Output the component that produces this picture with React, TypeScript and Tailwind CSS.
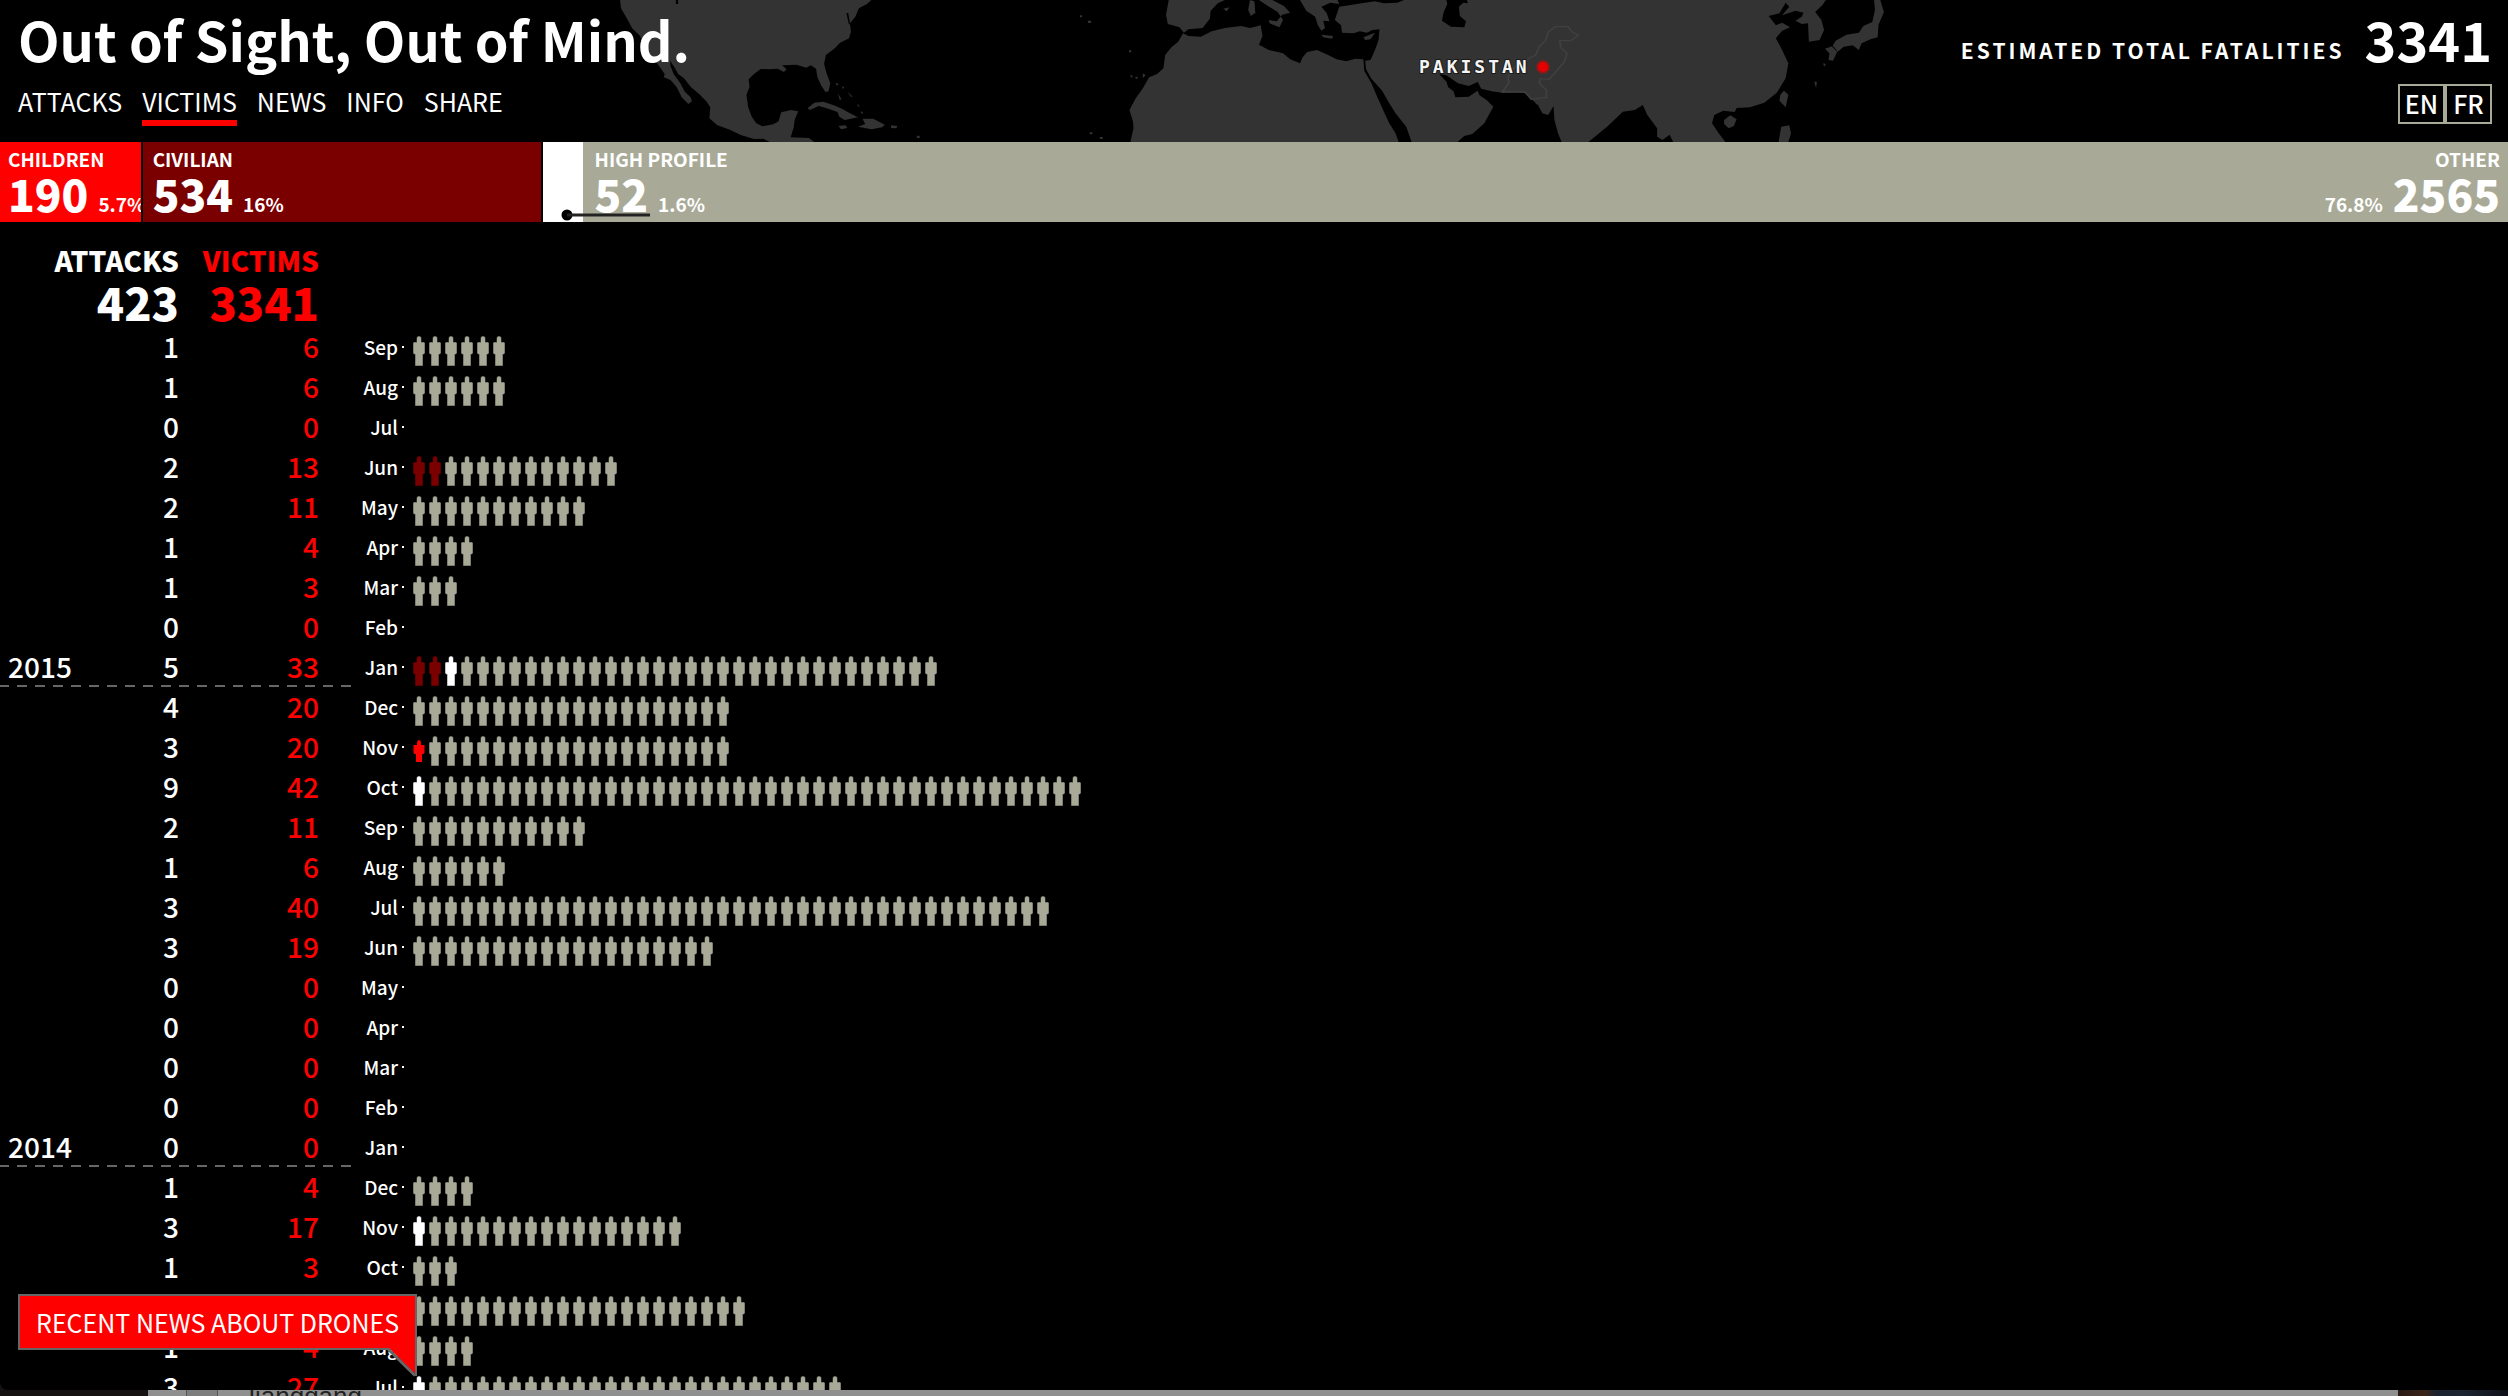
type Kind = "child" | "civilian" | "highProfile" | "other";

interface MonthRow {
  month: string;
  attacks: number;
  victims: number;
  child?: number;
  civilian?: number;
  highProfile?: number;
  year?: number;
}

const TOTAL = 3341;

const NAV = ["ATTACKS", "VICTIMS", "NEWS", "INFO", "SHARE"];

const ROWS: MonthRow[] = [
  { month: "Sep", attacks: 1, victims: 6 },
  { month: "Aug", attacks: 1, victims: 6 },
  { month: "Jul", attacks: 0, victims: 0 },
  { month: "Jun", attacks: 2, victims: 13, civilian: 2 },
  { month: "May", attacks: 2, victims: 11 },
  { month: "Apr", attacks: 1, victims: 4 },
  { month: "Mar", attacks: 1, victims: 3 },
  { month: "Feb", attacks: 0, victims: 0 },
  { month: "Jan", attacks: 5, victims: 33, civilian: 2, highProfile: 1, year: 2015 },
  { month: "Dec", attacks: 4, victims: 20 },
  { month: "Nov", attacks: 3, victims: 20, child: 1 },
  { month: "Oct", attacks: 9, victims: 42, highProfile: 1 },
  { month: "Sep", attacks: 2, victims: 11 },
  { month: "Aug", attacks: 1, victims: 6 },
  { month: "Jul", attacks: 3, victims: 40 },
  { month: "Jun", attacks: 3, victims: 19 },
  { month: "May", attacks: 0, victims: 0 },
  { month: "Apr", attacks: 0, victims: 0 },
  { month: "Mar", attacks: 0, victims: 0 },
  { month: "Feb", attacks: 0, victims: 0 },
  { month: "Jan", attacks: 0, victims: 0, year: 2014 },
  { month: "Dec", attacks: 1, victims: 4 },
  { month: "Nov", attacks: 3, victims: 17, highProfile: 1 },
  { month: "Oct", attacks: 1, victims: 3 },
  { month: "Sep", attacks: 4, victims: 21 },
  { month: "Aug", attacks: 1, victims: 4 },
  { month: "Jul", attacks: 3, victims: 27, highProfile: 1 },
];

const FILL: Record<Kind, string> = {
  child: "fill-[#ff0000]",
  civilian: "fill-[#7a0000]",
  highProfile: "fill-white",
  other: "fill-[#a8aa97]",
};

function Person({ kind }: { kind: Kind }) {
  return (
    <svg viewBox="0 0 16 40" className={`h-10 w-4 shrink-0 ${FILL[kind]}`} aria-hidden="true">
      {kind === "child" ? (
        <path d="M6 15.500Q6 13 8 13T10 15.500V18H13.500V26L12.500 27H11V35H5V27H3.500L2.500 26V18H6Z" />
      ) : (
        <>
          <path d="M5.500 11.500Q5.500 9 8 9T10.500 11.500V15H13L14 16V26L13 27.500H12V39H4V27.500H3L2 26V16L3 15H5.500Z" opacity="0.5" />
          <path d="M6 11.500Q6 9.500 8 9.500T10 11.500V15.500H13L13.500 16V26L12.500 27H11.500V38.500H4.500V27H3.500L2.500 26V16L3 15.500H6Z" />
        </>
      )}
    </svg>
  );
}

function peopleOf(row: MonthRow): Kind[] {
  const { child = 0, civilian = 0, highProfile = 0, victims } = row;
  return [
    ...Array<Kind>(child).fill("child"),
    ...Array<Kind>(civilian).fill("civilian"),
    ...Array<Kind>(highProfile).fill("highProfile"),
    ...Array<Kind>(victims - child - civilian - highProfile).fill("other"),
  ];
}

function WorldMap() {
  return (
    <svg
      viewBox="0 0 1392 142"
      width="1392"
      height="142"
      className="absolute top-0 left-1/2 -translate-x-1/2"
      role="img"
      aria-label="World map with Pakistan marked"
    >
      <g transform="translate(42 0) scale(.4464 .3333)" fill="#333">
        <path d="M45 0L47 25 60 55 72 85 90 108 97 140 110 168 128 190 145 222 143 232 158 240 172 262 183 292 198 312 206 304 203 292 190 275 180 250 165 222 158 198 157 182 168 205 175 222 188 235 204 262 222 282 238 304 247 322 245 355 262 375 292 390 315 405 345 417 366 416 380 426H480L468 414 427 412 434 382 436 360 444 334 428 330 406 337 400 364 388 373 364 379 350 370 340 350 332 322 328 285 335 260 333 238 345 222 360 207 380 208 398 206 412 216 418 208 408 196 440 194 462 203 472 196 484 206 487 232 495 255 505 276 512 274 516 250 508 222 502 192 506 165 526 145 538 128 558 115 562 95 560 70 572 50 580 25 598 12 608 0Z" />
        <path d="M465 325L480 308 500 305 524 316 542 326 560 340 578 352 548 360 536 350 532 336 508 325 490 318 470 330ZM578 380L594 372 588 356 612 356 638 374 632 382 608 388ZM534 378L550 376 554 384 540 388ZM652 376L666 378 664 385 652 384Z" />
        <path d="M527 248L535 252 531 257ZM542 258L547 262 544 268ZM533 280L541 298 537 300ZM555 275L566 290 562 290ZM576 312L582 318 578 320ZM584 334L590 338 586 342ZM1075 46H1080V52H1075ZM1093 62H1100V69H1093ZM1185 151H1190V157H1185ZM1187 224L1194 228 1191 234ZM1198 232L1206 230 1202 238ZM1216 220L1222 226 1216 234ZM710 407H716V414H710ZM1097 397H1103V403H1097ZM1120 411H1126V417H1120Z" />
        <path d="M552 40L558 75 560 70 556 38ZM170 0H175V12H170Z" fill="#000" />
        <path d="M1274 0L1268 45 1272 72 1298 82 1308 98 1318 88 1350 84 1366 56 1368 32 1384 10 1400 0ZM1456 0L1466 4 1466 40 1458 48 1452 30ZM1396 26L1410 22 1404 34Z" />
      </g>
      <g transform="translate(692 0) scale(.4464 .3333)" fill="#333">
        <path d="M-150 100L-161 125 -176 142 -190 165 -194 205 -208 222 -226 232 -240 265 -256 295 -270 330 -262 365 -261 385 -268 426H333L326 400 312 370 300 335 285 290 272 250 256 212 254 178 236 176 216 184 194 178 175 165 150 150 128 156 118 172 112 190 90 178 74 160 42 150 20 134 28 108 24 76 0 84 -20 78 -56 84 -86 94 -110 110 -138 108Z" />
        <path d="M20 0L40 18 62 36 74 60 66 82 44 70 42 60 60 64 72 44 90 38 76 18 50 0ZM0 5L10 10 12 40 2 44Z" />
        <path d="M112 0L126 32 146 50 152 76 160 92 168 84 164 62 178 64 172 40 160 20 180 8 200 12 196 0ZM160 104L186 108 184 116 164 112ZM254 112L280 98 270 118 258 120Z" />
        <path d="M345 0L330 8 300 10 280 4 250 10 222 16 200 20 196 36 190 60 204 76 206 98 232 100 246 94 262 98 274 90 290 88 288 120 280 150 270 180 258 182 260 208 272 236 296 272 312 310 326 340 350 380 362 426H465L480 408 498 402 525 370 545 320 530 300 514 286 510 272 490 290 460 292 456 274 444 262 440 245 424 222 440 226 466 250 490 258 510 246 518 266 542 274 565 278 600 276 616 280 645 315 655 340 668 345 680 318 682 360 690 400 698 426H758L800 380 835 335 862 330 880 315 890 345 912 385 912 410 924 420 940 404 948 426H1065L1050 400 1035 370 1040 345 1060 332 1086 336 1090 324 1120 322 1152 308 1180 278 1200 235 1206 190 1192 150 1178 115 1192 92 1210 82 1192 68 1178 76 1162 48 1186 40 1200 8 1208 20 1192 46 1222 32 1240 38 1236 50 1222 62 1236 72 1250 70 1252 125 1276 120 1286 90 1280 60 1266 36 1282 16 1290 0Z" />
        <path d="M440 0L442 12 434 36 430 62 450 80 480 82 484 64 470 48 468 20 478 8 488 10 486 0Z" fill="#000" />
        <path d="M1062 360L1076 346 1090 358 1084 378 1072 385 1062 372ZM1196 272L1206 284 1200 322 1186 302 1188 284ZM1190 380L1208 376 1212 400 1206 426H1184ZM1398 0L1400 30 1394 66 1374 78 1364 98 1336 104 1312 122 1304 140 1316 156 1330 140 1350 136 1364 150 1370 130 1390 118 1406 112 1408 74 1420 36 1412 0ZM1288 146L1306 138 1316 154 1306 182 1296 180 1298 160ZM1284 190L1290 192 1286 200ZM1264 245H1270L1268 264ZM640 308H654V313H640Z" />
        <path
          d="M578 232L590 205 622 178 640 165 648 140 662 122 668 96 684 80 712 80 722 96 736 106 718 122 694 122 696 142 710 160 704 186 686 214 670 238 650 236 648 250 664 270 664 292 630 298 616 276 566 276 580 248Z"
          fill="none"
          stroke="#404040"
          strokeWidth="4"
        />
      </g>
      <text
        x="861"
        y="73"
        fill="#f4f4f4"
        stroke="#1a1a1a"
        strokeWidth="2"
        paintOrder="stroke"
        className="font-['DejaVu_Sans_Mono',monospace] text-[18px] font-bold tracking-[3px]"
      >
        PAKISTAN
      </text>
      <circle cx="985" cy="67" r="7" fill="#e00" opacity="0.4" />
      <circle cx="985" cy="67" r="5" fill="#e60000" />
    </svg>
  );
}

function Header() {
  return (
    <header className="relative flex h-[142px] shrink-0 justify-between pt-[7px] pr-4 pl-[18px]">
      <WorldMap />
      <div className="relative">
        <h1 className="text-[54px] leading-[64px] font-bold">Out of Sight, Out of Mind.</h1>
        <nav className="mt-3.5 flex gap-5 text-[25px] leading-8">
          {NAV.map((item) => (
            <a
              key={item}
              href={`#${item.toLowerCase()}`}
              className={
                item === "VICTIMS"
                  ? "border-b-6 border-[#ff0000] pb-[3px]"
                  : "border-b-6 border-transparent pb-[3px]"
              }
            >
              {item}
            </a>
          ))}
        </nav>
      </div>
      <div className="relative flex flex-col items-end">
        <p className="flex items-end gap-5 font-bold">
          <span className="text-[21px] leading-[42px] tracking-[3px]">ESTIMATED TOTAL FATALITIES</span>
          <span className="text-[54px] leading-[64px]">3341</span>
        </p>
        <div className="mt-[13px] flex text-[25px] leading-[34px] font-medium">
          <button className="w-[47px] border-2 border-[#a8aa97] pb-0.5">EN</button>
          <button className="w-[47px] border-2 border-[#a8aa97] pb-0.5">FR</button>
        </div>
      </div>
    </header>
  );
}

function Figure({ label, value, percent, reverse }: { label: string; value: number; percent: string; reverse?: boolean }) {
  return (
    <div className={reverse ? "text-right" : ""}>
      <p className="text-[19px] leading-6 font-bold whitespace-nowrap">{label}</p>
      <p className={reverse ? "flex flex-row-reverse items-baseline gap-2.5" : "flex items-baseline gap-2.5"}>
        <span className="text-[44px] leading-[44px] font-black">{value}</span>
        <span className="text-[19px] leading-6 font-bold">{percent}</span>
      </p>
    </div>
  );
}

function share(n: number) {
  return { width: `${(n / TOTAL) * 100}%` };
}

function Breakdown() {
  return (
    <section className="flex h-20 shrink-0">
      <div className="shrink-0 overflow-hidden border-r-2 border-black bg-[#ff0000] pt-[5px] pl-2" style={share(190)}>
        <Figure label="CHILDREN" value={190} percent="5.7%" />
      </div>
      <div className="shrink-0 overflow-hidden border-r-2 border-black bg-[#7a0000] pt-[5px] pl-2.5" style={share(534)}>
        <Figure label="CIVILIAN" value={534} percent="16%" />
      </div>
      <div className="relative shrink-0 bg-white" style={share(52)}>
        <div className="absolute top-[5px] left-full ml-3">
          <Figure label="HIGH PROFILE" value={52} percent="1.6%" />
        </div>
        <svg viewBox="0 0 90 12" className="absolute bottom-px left-[18px] h-3 w-[90px]" aria-hidden="true">
          <circle cx="6" cy="6" r="5.500" fill="#000" />
          <path d="M6 6H89" stroke="#222" strokeWidth="3" />
        </svg>
      </div>
      <div className="flex-1 bg-[#a8aa97] pt-[5px] pr-2">
        <Figure label="OTHER" value={2565} percent="76.8%" reverse />
      </div>
    </section>
  );
}

function Timeline() {
  return (
    <table className="mt-[18px] w-full table-fixed border-collapse text-right">
      <colgroup>
        <col className="w-20" />
        <col className="w-[100px]" />
        <col className="w-[140px]" />
        <col className="w-[86px]" />
        <col />
      </colgroup>
      <thead className="font-black">
        <tr className="h-10 text-[28px] leading-[38px]">
          <th colSpan={2} className="p-0 pr-px text-right font-black">ATTACKS</th>
          <th className="p-0 pr-px text-right font-black text-[#ff0000]">VICTIMS</th>
          <td colSpan={2} />
        </tr>
        <tr className="text-[45px] leading-[44px]">
          <td colSpan={2} className="pr-px pb-[3px]">423</td>
          <td className="pr-px pb-[3px] text-[#ff0000]">3341</td>
          <td colSpan={2} />
        </tr>
      </thead>
      <tbody className="text-[28px] leading-[38px] font-medium">
        {ROWS.map((row, i) => (
          <tr key={i} className="h-10">
            <th className="relative p-0 pb-0.5 pl-2 text-left font-medium">
              {row.year}
              {row.year && (
                <span className="absolute bottom-0 left-0 h-0.5 w-[351px] bg-[repeating-linear-gradient(to_right,#666_0_9px,transparent_9px_17px,#666_17px_18px)]" />
              )}
            </th>
            <td className="p-0 pr-px pb-0.5">{row.attacks}</td>
            <td className="p-0 pr-px pb-0.5 text-[#ff0000]">{row.victims}</td>
            <td className="p-0">
              <span className="flex items-center justify-end gap-1 text-[19px] leading-10">
                {row.month}
                <span className="mr-0.5 size-0.5 bg-white" />
              </span>
            </td>
            <td className="p-0">
              <span className="flex h-10 pl-[5px]">
                {peopleOf(row).map((kind, j) => (
                  <Person key={j} kind={kind} />
                ))}
              </span>
            </td>
          </tr>
        ))}
      </tbody>
    </table>
  );
}

function NewsCallout() {
  return (
    <a
      href="#recent-news"
      className="absolute bottom-[46px] left-[18px] border-2 border-[#666] bg-[#ff0000] px-4 text-[25px] leading-[52px] whitespace-nowrap"
    >
      RECENT NEWS ABOUT DRONES
      <svg viewBox="0 0 32 32" className="absolute top-full -right-0.5 size-8" aria-hidden="true">
        <path d="M2 -2H31V27Z" fill="#f00" />
        <path d="M2 0L30 27.500" stroke="#666" strokeWidth="3" />
        <path d="M31 0V28" stroke="#666" strokeWidth="2" />
      </svg>
    </a>
  );
}

function DesktopEdge() {
  return (
    <div className="flex h-1.5 shrink-0 overflow-hidden bg-[#171212]">
      <div className="w-[148px] shrink-0" />
      <div className="flex flex-1 bg-[#8f8f8f] text-[26px] leading-3 text-[#222]">
        <span className="ml-[38px] h-1.5 w-8 border-x border-[#555] bg-[#7d7d7d]" />
        <span className="ml-6 font-['Liberation_Sans',sans-serif]">Jianggang</span>
      </div>
      <div className="w-[110px] shrink-0 bg-[linear-gradient(to_right,#2a1a15,#3a2418_25%,#1a2230_35%,#1c2431_60%,#0f1018)]" />
    </div>
  );
}

export default function App() {
  return (
    <div className="relative flex h-screen flex-col overflow-hidden bg-[#171212] font-['Noto_Sans_CJK_JP','Noto_Sans',sans-serif] text-white">
      <main className="flex min-h-0 flex-1 flex-col overflow-hidden rounded-bl-lg bg-black">
        <Header />
        <Breakdown />
        <div className="min-h-0 flex-1 overflow-hidden">
          <Timeline />
        </div>
      </main>
      <DesktopEdge />
      <NewsCallout />
    </div>
  );
}
